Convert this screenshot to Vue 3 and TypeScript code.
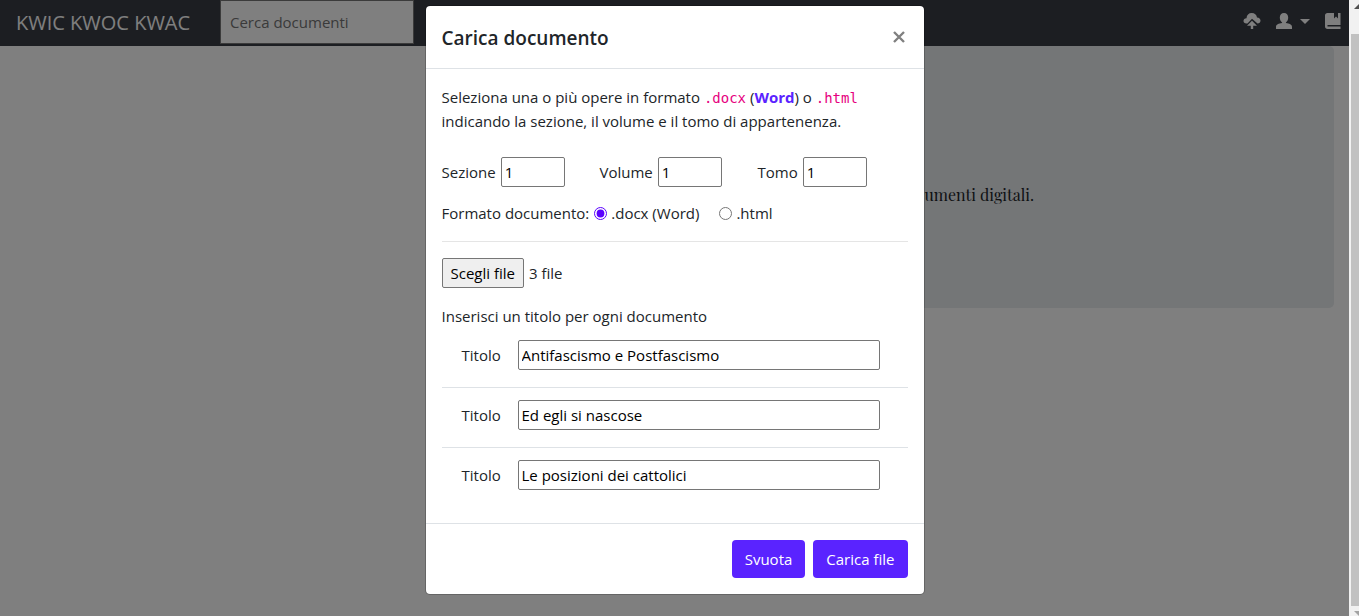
<script setup lang="ts">
import { ref } from 'vue'

interface NumberField {
  id: string
  label: string
  value: number
}

const numberFields = ref<NumberField[]>([
  { id: 'sezione', label: 'Sezione', value: 1 },
  { id: 'volume', label: 'Volume', value: 1 },
  { id: 'tomo', label: 'Tomo', value: 1 },
])
const format = ref<'docx' | 'html'>('docx')
const titles = ref<string[]>([
  'Antifascismo e Postfascismo',
  'Ed egli si nascose',
  'Le posizioni dei cattolici',
])
const query = ref('')

function clearTitles(): void {
  titles.value = titles.value.map(() => '')
}
</script>

<template>
  <div class="page">
    <div class="view">
      <nav class="navbar">
        <a class="brand" href="#">KWIC KWOC KWAC</a>
        <input v-model="query" class="search" type="search" placeholder="Cerca documenti" aria-label="Cerca documenti" />
        <div class="actions">
          <a href="#" class="action" aria-label="Carica">
            <svg width="18" height="18" viewBox="0 0 18 18" fill="currentColor">
              <path d="M3.500 11.500C1.600 11.500.5 10.500.5 9 .5 7.500 1.600 6.500 3.500 6.300 3.700 3 5.700 1 8.700 1c2.900 0 4.900 1.700 5.300 4.400 2.200.200 3.500 1.400 3.500 3.200 0 1.800-1.200 2.900-3 2.900L9 6.800 4.500 11.500z" />
              <path d="M9 8.800l5 5h-3.800V17H7.800v-3.200H4z" />
            </svg>
          </a>
          <a href="#" class="action user" aria-label="Utente">
            <svg width="18" height="18" viewBox="0 0 18 18" fill="currentColor">
              <path d="M9 1c2.600 0 4.200 1.900 4.200 4.600 0 2.200-.9 4-2.300 5v.4c3.400.3 6.100 1.500 6.100 4v2H1v-2c0-2.500 2.700-3.700 6.100-4v-.4c-1.400-1-2.300-2.800-2.300-5C4.800 2.900 6.400 1 9 1z" />
            </svg>
            <span class="caret"></span>
          </a>
          <a href="#" class="action" aria-label="Opere">
            <svg width="18" height="18" viewBox="0 0 18 18" fill="currentColor">
              <path d="M3.500 1H10v5.500l2-2 2 2V1h2.500v12H3.500v1.600h13V17H3.500C2 17 1 16 1 14.500v-11C1 2 2 1 3.500 1z" />
            </svg>
          </a>
        </div>
      </nav>
      <main class="content">
        <section class="jumbotron">
          <p class="lead">documenti digitali.</p>
        </section>
      </main>

      <div class="backdrop">
        <div class="modal" role="dialog" aria-labelledby="modal-title">
          <header class="modal-header">
            <h5 id="modal-title">Carica documento</h5>
            <button class="close" type="button" aria-label="Chiudi">
              <svg width="12" height="12" viewBox="0 0 12 12" fill="none" stroke="currentColor" stroke-width="2.400">
                <path d="M1 1l10 10M11 1L1 11" />
              </svg>
            </button>
          </header>
          <div class="modal-body">
            <p class="intro">
              Seleziona una o più opere in formato <code>.docx</code> (<a href="#">Word</a>) o <code>.html</code><br />
              indicando la sezione, il volume e il tomo di appartenenza.
            </p>
            <div class="numbers">
              <div v-for="field in numberFields" :key="field.id" class="number">
                <label :for="field.id">{{ field.label }}</label>
                <input :id="field.id" v-model="field.value" type="number" min="1" />
              </div>
            </div>
            <div class="formats" role="radiogroup" aria-labelledby="format-label">
              <span id="format-label">Formato documento:</span>
              <label class="radio"><input v-model="format" type="radio" name="format" value="docx" />.docx (Word)</label>
              <label class="radio"><input v-model="format" type="radio" name="format" value="html" />.html</label>
            </div>
            <hr />
            <div class="picker">
              <button type="button">Scegli file</button>
              <span>3 file</span>
            </div>
            <p class="hint">Inserisci un titolo per ogni documento</p>
            <div class="titles">
              <div v-for="(_, i) in titles" :key="i" class="title-row">
                <label :for="`titolo-${i}`">Titolo</label>
                <input :id="`titolo-${i}`" v-model="titles[i]" type="text" />
              </div>
            </div>
          </div>
          <footer class="modal-footer">
            <button type="button" @click="clearTitles">Svuota</button>
            <button type="button">Carica file</button>
          </footer>
        </div>
      </div>
    </div>
    <div class="scrollbar" aria-hidden="true">
      <svg class="arrow" width="10" height="6" viewBox="0 0 10 6"><path d="M5 6l5-5v5z" fill="#505050" /></svg>
      <span class="thumb"></span>
      <svg class="arrow" width="10" height="6" viewBox="0 0 10 6"><path d="M5 1h5v5z" fill="#a3a3a3" /></svg>
    </div>
  </div>
</template>

<style>
body {
  margin: 0;
  overflow: hidden;
}
</style>

<style scoped>
* {
  box-sizing: border-box;
}

.page {
  display: flex;
  height: 100vh;
  font: 15px/24px "Segoe UI", "Open Sans", "Noto Sans", sans-serif;
  color: #212529;
}

input,
button {
  font: inherit;
}

.view {
  position: relative;
  flex: 1;
  min-width: 0;
  background: #fff;
}

.navbar {
  display: flex;
  align-items: center;
  height: 46px;
  padding: 0 7px 0 16px;
  background: #383c44;
}

.brand {
  width: 204px;
  color: #fff;
  font-size: 20px;
  text-decoration: none;
  white-space: nowrap;
}

.search {
  width: 194px;
  height: 44px;
  margin-bottom: 2px;
  padding: 0 9px;
  border: 1px solid #767676;
  border-radius: 0;
  background: #fff;
  outline: none;
  appearance: none;
}

.search::placeholder {
  color: #757575;
}

.actions {
  display: flex;
  gap: 14px;
  margin-left: auto;
  padding-bottom: 4px;
}

.action {
  display: flex;
  align-items: center;
  color: #fff;
}

.action svg {
  display: block;
}

.caret {
  margin-left: 7px;
  border: 5px solid transparent;
  border-top-color: #fff;
  border-bottom: 0;
}

.content {
  display: flex;
  justify-content: flex-end;
  padding: 0 15px;
}

.jumbotron {
  display: flex;
  align-items: center;
  justify-content: flex-end;
  width: 50%;
  height: 262px;
  padding: 36px 300px 0 0;
  border-radius: 5px;
  background: #e9ecef;
}

.lead {
  margin: 0;
  font: 16px/28px "Playfair Display", "Liberation Serif", serif;
}

.backdrop {
  position: absolute;
  inset: 0;
  display: flex;
  align-items: flex-start;
  justify-content: center;
  padding-top: 5px;
  background: rgba(0, 0, 0, 0.5);
}

.modal {
  width: 500px;
  max-width: 100%;
  border: 1px solid rgba(0, 0, 0, 0.2);
  border-radius: 5px;
  background: #fff;
  background-clip: padding-box;
}

.modal-header {
  display: flex;
  align-items: center;
  justify-content: space-between;
  height: 63px;
  padding: 0 16px;
  border-bottom: 1px solid #dee2e6;
}

.modal-header h5 {
  margin: 0;
  padding-top: 2px;
  font-size: 19px;
  font-weight: 600;
}

.close {
  display: flex;
  padding: 3px;
  border: 0;
  background: none;
  color: #808080;
}

.modal-body {
  padding: 16px;
}

.intro {
  margin: 0 0 24px;
}

.intro code {
  color: #e6007e;
  font: 14px/16px "DejaVu Sans Mono", monospace;
}

.intro a {
  color: #5a23ff;
  font-weight: 700;
  text-decoration: none;
}

.numbers {
  display: grid;
  grid-template-columns: repeat(3, 1fr);
  gap: 8px;
}

.number {
  display: flex;
  align-items: center;
  gap: 5px;
}

.number input,
.title-row input {
  height: 30px;
  padding: 0 3px;
  border: 1px solid #767676;
  border-radius: 2px;
  background: #fff;
  color: #000;
}

.number input {
  width: 64px;
}

.formats {
  display: flex;
  align-items: center;
  margin-top: 14px;
}

.radio {
  display: flex;
  align-items: center;
  margin-right: 15px;
}

.radio input {
  width: 13px;
  height: 13px;
  margin: 0 4px 0 5px;
  accent-color: #5a00ff;
}

hr {
  margin: 16px 0;
  border: 0;
  border-top: 1px solid #e5e5e5;
}

.picker {
  display: flex;
  align-items: center;
  gap: 5px;
}

.picker button {
  height: 30px;
  padding: 0 8px;
  border: 1px solid #767676;
  border-radius: 2px;
  background: #efefef;
  color: #000;
}

.hint {
  margin: 16px 0 0;
}

.title-row {
  display: flex;
  align-items: center;
  height: 60px;
  padding: 0 28px 6px 20px;
  border-bottom: 1px solid #dee2e6;
}

.title-row:last-child {
  height: 59px;
  border-bottom: 0;
}

.title-row label {
  width: 56px;
}

.title-row input {
  flex: 1;
  min-width: 0;
}

.modal-footer {
  display: flex;
  justify-content: flex-end;
  gap: 8px;
  padding: 16px;
  border-top: 1px solid #dee2e6;
}

.modal-footer button {
  height: 38px;
  padding: 0 13px;
  border: 0;
  border-radius: 4px;
  background: #5a23ff;
  color: #fff;
}

.scrollbar {
  display: flex;
  flex-direction: column;
  width: 10px;
  padding-top: 3px;
  background: #f1f1f1;
}

.arrow {
  flex: none;
}

.thumb {
  flex: 1;
  margin: 25px 0 4px 2px;
  background: #c1c1c1;
}
</style>
